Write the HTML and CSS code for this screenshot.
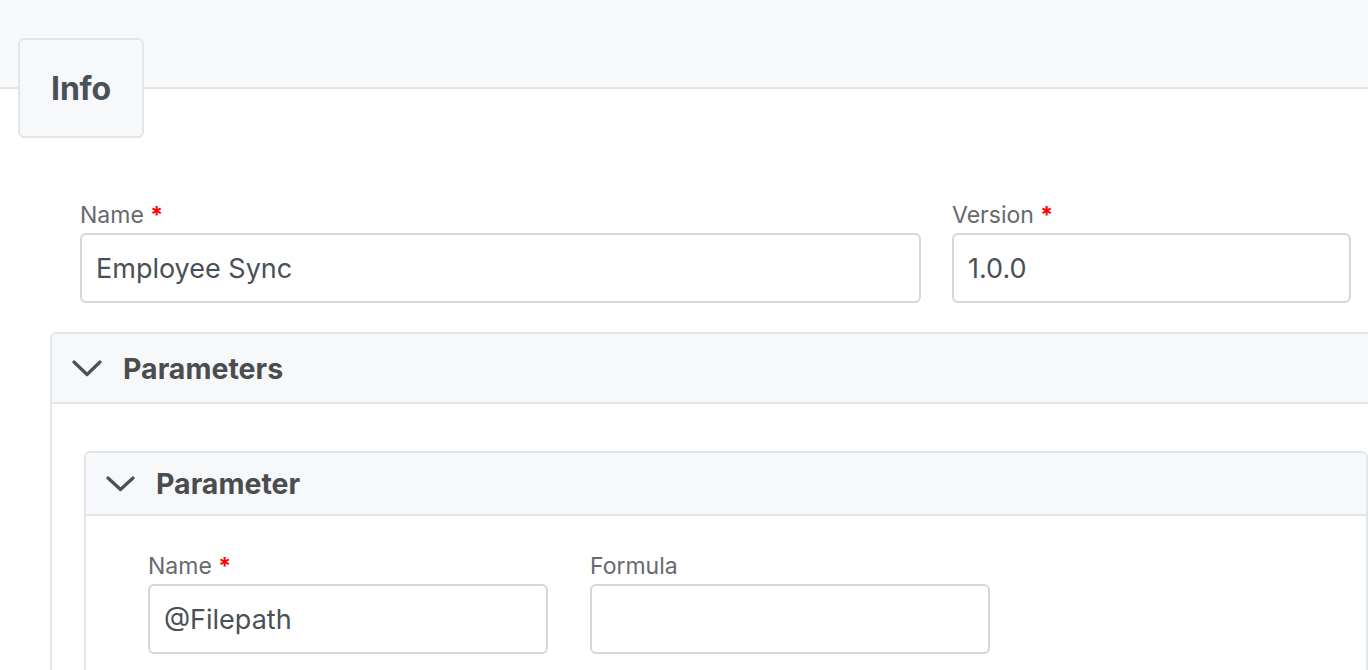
FILE: index.html
```html
<!DOCTYPE html>
<html lang="en">
<head>
<meta charset="utf-8">
<title>Info</title>
<link rel="stylesheet" href="styles.css">
</head>
<body>
<div class="page">
  <div class="topbar">
    <div class="tab">Info</div>
  </div>

  <div class="form-row top-row">
    <div class="field grow">
      <label class="label">Name <span class="req">*</span></label>
      <div class="input">Employee Sync</div>
    </div>
    <div class="field version">
      <label class="label">Version <span class="req">*</span></label>
      <div class="input">1.0.0</div>
    </div>
  </div>

  <section class="panel outer">
    <div class="panel-head outer-head">
      <svg class="chev" width="30" height="17" viewBox="0 0 30 17"><path d="M2 2 L15 14.5 L28 2" fill="none" stroke="#495057" stroke-width="3.2" stroke-linecap="round" stroke-linejoin="round"/></svg>
      <span class="panel-title">Parameters</span>
    </div>
    <div class="panel-body outer-body">
      <section class="panel inner">
        <div class="panel-head inner-head">
          <svg class="chev" width="29" height="16" viewBox="0 0 29 16"><path d="M2 2 L14.5 13.5 L27 2" fill="none" stroke="#495057" stroke-width="3.2" stroke-linecap="round" stroke-linejoin="round"/></svg>
          <span class="panel-title">Parameter</span>
        </div>
        <div class="panel-body inner-body">
          <div class="form-row inner-row">
            <div class="field small">
              <label class="label">Name <span class="req">*</span></label>
              <div class="input">@Filepath</div>
            </div>
            <div class="field small">
              <label class="label">Formula</label>
              <div class="input"></div>
            </div>
          </div>
        </div>
      </section>
    </div>
  </section>
</div>
</body>
</html>
```

FILE: styles.css
```css
html, body {
  margin: 0;
  padding: 0;
  background: #ffffff;
  overflow: hidden;
}
body {
  font-family: Inter, "Liberation Sans", Arial, sans-serif;
  color: #495057;
}
.page {
  width: 1368px;
  height: 670px;
  overflow: hidden;
}
.topbar {
  background: #f8f9fa;
  border-bottom: 2px solid #e2e5e9;
  padding: 38px 0 0 18px;
  box-sizing: border-box;
  height: 89px;
}
.tab {
  width: 126px;
  height: 100px;
  box-sizing: border-box;
  background: #f7f8fa;
  border: 2px solid #e2e5e9;
  border-radius: 6px;
  display: flex;
  align-items: center;
  justify-content: center;
  font-size: 32px;
  font-weight: 700;
  color: #495057;
  letter-spacing: -0.2px;
}
.form-row {
  display: flex;
}
.top-row {
  padding: 112px 17px 0 80px;
  gap: 31px;
}
.field {
  display: flex;
  flex-direction: column;
}
.grow { flex: 1; }
.version { width: 399px; }
.small { width: 400px; }
.label {
  font-size: 23px;
  line-height: 28px;
  color: #666a6e;
  margin-bottom: 4px;
}
.req {
  color: #ff0000;
  font-weight: 700;
}
.input {
  height: 70px;
  box-sizing: border-box;
  border: 2px solid #d3d7dc;
  border-radius: 6px;
  padding: 0 14px 0 14px;
  display: flex;
  align-items: center;
  font-size: 27px;
  color: #495057;
  background: #fff;
}
.panel {
  border: 2px solid #e2e5e9;
  border-radius: 6px;
  box-sizing: border-box;
  background: #fff;
}
.outer {
  margin: 29px 0 0 50px;
  width: 1352px;
}
.panel-head {
  background: #f7f8fa;
  border-bottom: 2px solid #e2e5e9;
  display: flex;
  align-items: center;
  border-radius: 6px 6px 0 0;
}
.outer-head {
  height: 70px;
  box-sizing: border-box;
  padding-left: 20px;
  gap: 21px;
}
.inner-head {
  height: 63px;
  box-sizing: border-box;
  padding-left: 20px;
  gap: 21px;
}
.panel-title {
  font-size: 28.5px;
  font-weight: 700;
  color: #4a4d50;
}
.outer-body {
  padding: 47px 32px 0 32px;
}
.inner-body {
  padding: 36px 0 20px 62px;
}
.inner-row {
  gap: 42px;
}
```
